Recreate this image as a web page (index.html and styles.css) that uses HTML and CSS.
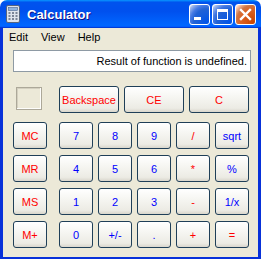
FILE: index.html
```html
<!DOCTYPE html>
<html lang="en">
<head>
    <meta charset="UTF-8">
    <title>Calculator</title>
    <link rel="stylesheet" href="styles.css">
</head>
<body>
    <div class="window">
        <!-- 标题栏 -->
        <div class="titlebar">
            <svg class="app-icon" width="16" height="18" viewBox="0 0 16 18">
                <rect x="1.5" y="0.5" width="13" height="17" rx="1.5" fill="#dfe4ec" stroke="#55657f"/>
                <rect x="3.5" y="2.5" width="9" height="3" fill="#8fb2dc" stroke="#4a6790" stroke-width="0.6"/>
                <g fill="#7b8596">
                    <rect x="3.5" y="7" width="2" height="2"/><rect x="7" y="7" width="2" height="2"/><rect x="10.5" y="7" width="2" height="2"/>
                    <rect x="3.5" y="10" width="2" height="2"/><rect x="7" y="10" width="2" height="2"/><rect x="10.5" y="10" width="2" height="2"/>
                    <rect x="3.5" y="13" width="2" height="2"/><rect x="7" y="13" width="2" height="2"/><rect x="10.5" y="13" width="2" height="2"/>
                </g>
            </svg>
            <span class="title">Calculator</span>
            <div class="controls">
                <div class="ctl ctl-blue">
                    <svg width="19" height="19" viewBox="0 0 19 19"><rect x="4" y="12" width="7" height="3" fill="#fff"/></svg>
                </div>
                <div class="ctl ctl-blue">
                    <svg width="19" height="19" viewBox="0 0 19 19"><rect x="4.5" y="4.5" width="10" height="10" fill="none" stroke="#fff"/><rect x="4" y="4" width="11" height="3" fill="#fff"/></svg>
                </div>
                <div class="ctl ctl-red">
                    <svg width="19" height="19" viewBox="0 0 19 19"><path d="M5 5 L14 14 M14 5 L5 14" stroke="#fff" stroke-width="2.4" stroke-linecap="square"/></svg>
                </div>
            </div>
        </div>

        <div class="frame">
            <!-- 菜单栏 -->
            <div class="menubar">
                <span class="menu-item">Edit</span>
                <span class="menu-item">View</span>
                <span class="menu-item">Help</span>
            </div>

            <div class="content">
                <div class="display">Result of function is undefined.</div>

                <div class="keypad">
                    <div class="mem-col">
                        <div class="mem-box"></div>
                        <div class="mem-keys">
                            <button class="key red">MC</button>
                            <button class="key red">MR</button>
                            <button class="key red">MS</button>
                            <button class="key red">M+</button>
                        </div>
                    </div>
                    <div class="main-col">
                        <div class="top-row">
                            <button class="key wide red">Backspace</button>
                            <button class="key wide red">CE</button>
                            <button class="key wide red">C</button>
                        </div>
                        <div class="grid">
                            <button class="key blue">7</button>
                            <button class="key blue">8</button>
                            <button class="key blue">9</button>
                            <button class="key red">/</button>
                            <button class="key blue">sqrt</button>
                            <button class="key blue">4</button>
                            <button class="key blue">5</button>
                            <button class="key blue">6</button>
                            <button class="key red">*</button>
                            <button class="key blue">%</button>
                            <button class="key blue">1</button>
                            <button class="key blue">2</button>
                            <button class="key blue">3</button>
                            <button class="key red">-</button>
                            <button class="key blue">1/x</button>
                            <button class="key blue">0</button>
                            <button class="key blue">+/-</button>
                            <button class="key blue">.</button>
                            <button class="key red">+</button>
                            <button class="key red">=</button>
                        </div>
                    </div>
                </div>
            </div>
        </div>
    </div>
</body>
</html>
```

FILE: styles.css
```css
body{
    margin: 0;
    width: 261px;
    height: 259px;
    overflow: hidden;
    font-family: "Liberation Sans", Arial, sans-serif;
    font-size: 11px;
}
.window{
    width: 261px;
    height: 259px;
    display: flex;
    flex-direction: column;
}

/* 标题栏 */
.titlebar{
    height: 28px;
    flex: none;
    box-sizing: border-box;
    display: flex;
    align-items: center;
    padding: 0 5px 0 5px;
    border-radius: 7px 7px 0 0;
    background: linear-gradient(180deg, #0997ff, #0053ee 8%, #0050ee 40%, #0066ff 88%, #0066ff 93%, #005bff 95%, #003dd7 96%, #003dd7);
}
.app-icon{
    display: block;
    flex: none;
}
.title{
    margin-left: 6px;
    padding-top: 1px;
    color: #fff;
    font-weight: bold;
    font-size: 13px;
    text-shadow: 1px 1px #0f1089;
}
.controls{
    margin-left: auto;
    display: flex;
    gap: 2px;
}
.ctl{
    width: 21px;
    height: 21px;
    box-sizing: border-box;
    border: 1px solid #fff;
    border-radius: 3px;
}
.ctl svg{
    display: block;
}
.ctl-blue{
    background: radial-gradient(circle at 90% 90%, #0054e9 0%, #2263d5 55%, #4479e4 70%, #a3bbec 90%, #fff 100%);
}
.ctl-red{
    background: radial-gradient(circle at 90% 90%, #cc4600 0%, #dc6527 55%, #cd7546 70%, #ffccb2 90%, #fff 100%);
}

/* 窗口边框 */
.frame{
    flex: 1;
    display: flex;
    flex-direction: column;
    background-color: #ece9d8;
    border: 3px solid #0831d9;
    border-top: 0;
    border-bottom-width: 2px;
}
.menubar{
    height: 18px;
    display: flex;
    align-items: center;
    padding-left: 0;
    color: #000;
}
.menu-item{
    padding: 0 6px;
}
.menu-item + .menu-item{
    margin-left: 1px;
}

.content{
    flex: 1;
    padding: 4px 7px 0 10px;
}
.display{
    height: 22px;
    box-sizing: border-box;
    background-color: #fff;
    border: 1px solid #8e9aa4;
    text-align: right;
    line-height: 20px;
    padding-right: 3px;
    color: #000;
}

.keypad{
    display: flex;
    gap: 12px;
    margin-top: 14px;
}
.mem-col{
    width: 34px;
}
.mem-box{
    width: 26px;
    height: 23px;
    box-sizing: border-box;
    margin: 1px 0 0 3px;
    border: 1px solid #aca899;
    box-shadow: inset -1px -1px #fdfdfb, inset 1px 1px #d4d0c0;
}
.mem-keys{
    display: flex;
    flex-direction: column;
    gap: 6px;
    margin-top: 12px;
}
.main-col{
    width: 190px;
}
.top-row{
    display: flex;
    gap: 5px;
}
.grid{
    display: grid;
    grid-template-columns: repeat(5, 34px);
    grid-auto-rows: 27px;
    column-gap: 5px;
    row-gap: 6px;
    margin-top: 9px;
}

/* 按钮 */
.key{
    width: 34px;
    height: 27px;
    box-sizing: border-box;
    padding: 0;
    border: 1px solid #1f3f58;
    border-radius: 3px;
    background: linear-gradient(180deg, #ffffff 0%, #f6f6f2 40%, #ecebe4 85%, #d9d6cc 100%);
    font-family: "Liberation Sans", Arial, sans-serif;
    font-size: 11px;
}
.key.wide{
    width: 60px;
}
.red{
    color: #f00;
}
.blue{
    color: #00f;
}
```
